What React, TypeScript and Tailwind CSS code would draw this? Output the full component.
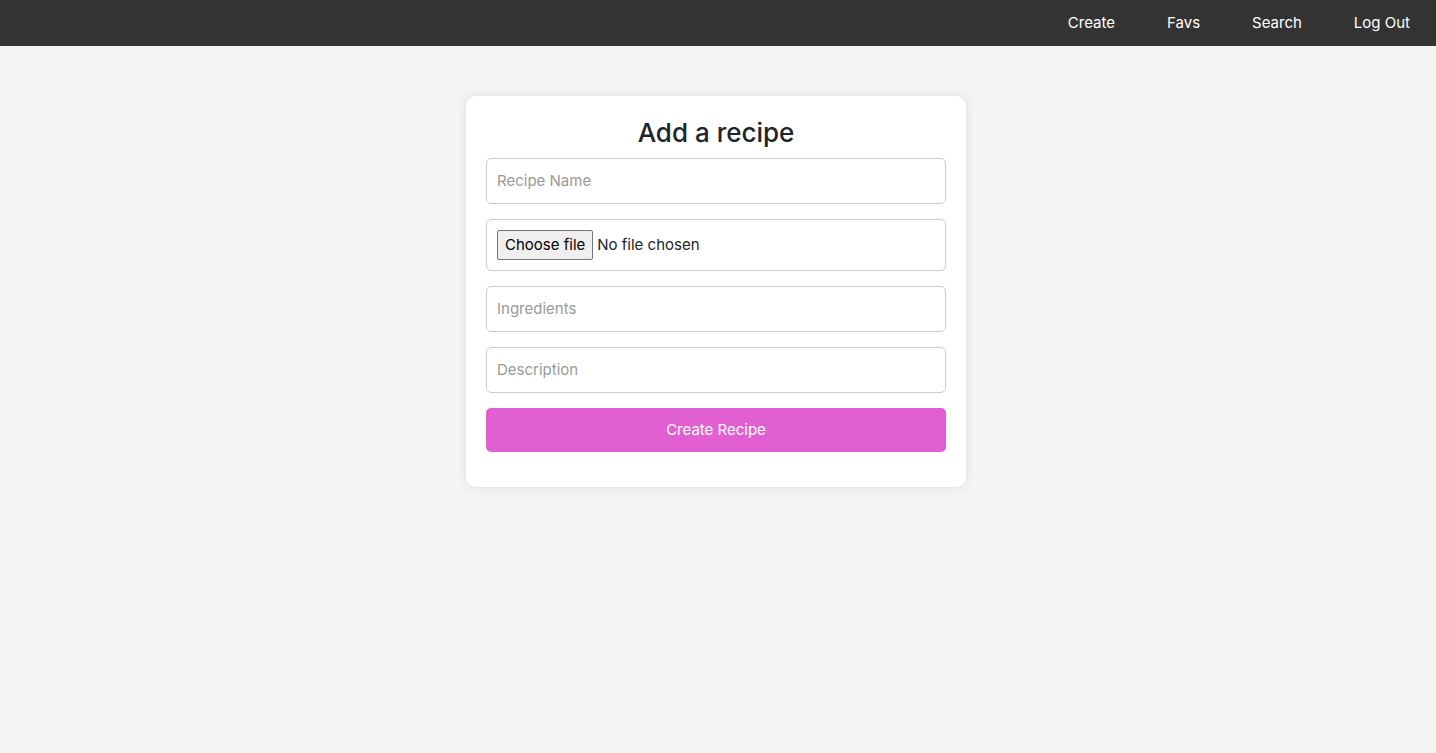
import { useState } from "react";

const links = ["Create", "Favs", "Search", "Log Out"];

const fieldClass =
  "mb-[15px] block w-full rounded-[5px] border border-[#ccc] bg-white p-[10px] text-[15px] leading-6 text-[#212529] placeholder:text-[#999]";

function NavBar() {
  return (
    <nav className="bg-[#333]">
      <ul className="flex justify-end gap-[52px] px-[26px] py-[11px]">
        {links.map((link) => (
          <li key={link}>
            <a href="#" className="block leading-6 text-white">
              {link}
            </a>
          </li>
        ))}
      </ul>
    </nav>
  );
}

function RecipeForm() {
  const [fileName, setFileName] = useState("");

  return (
    <form
      onSubmit={(event) => event.preventDefault()}
      className="w-full max-w-[500px] rounded-[10px] bg-white p-5 shadow-[0_0_10px_rgba(0,0,0,0.1)]"
    >
      <h2 className="mb-2 text-center text-[26px] leading-[34px] font-medium text-[#212529]">
        Add a recipe
      </h2>
      <input type="text" aria-label="Recipe Name" placeholder="Recipe Name" className={fieldClass} />
      <label className="relative mb-[15px] flex items-center gap-1 rounded-[5px] border border-[#ccc] bg-white p-[10px] text-[#212529]">
        <input
          type="file"
          className="sr-only"
          onChange={(event) => setFileName(event.target.files?.[0]?.name ?? "")}
        />
        <span className="rounded-[2px] border border-[#767676] bg-[#efefef] px-[7px] py-[2px] leading-6 text-black">
          Choose file
        </span>
        <span>{fileName || "No file chosen"}</span>
      </label>
      <input type="text" aria-label="Ingredients" placeholder="Ingredients" className={fieldClass} />
      <input type="text" aria-label="Description" placeholder="Description" className={fieldClass} />
      <button
        type="submit"
        className="mb-[15px] block w-full rounded-[5px] bg-[#e25fd1] p-[10px] leading-6 text-white"
      >
        Create Recipe
      </button>
    </form>
  );
}

export default function App() {
  return (
    <div className="min-h-screen bg-[#f4f4f4] font-['Inter',sans-serif] text-[15px]">
      <NavBar />
      <main className="flex justify-center pt-[50px] pr-1">
        <RecipeForm />
      </main>
    </div>
  );
}
